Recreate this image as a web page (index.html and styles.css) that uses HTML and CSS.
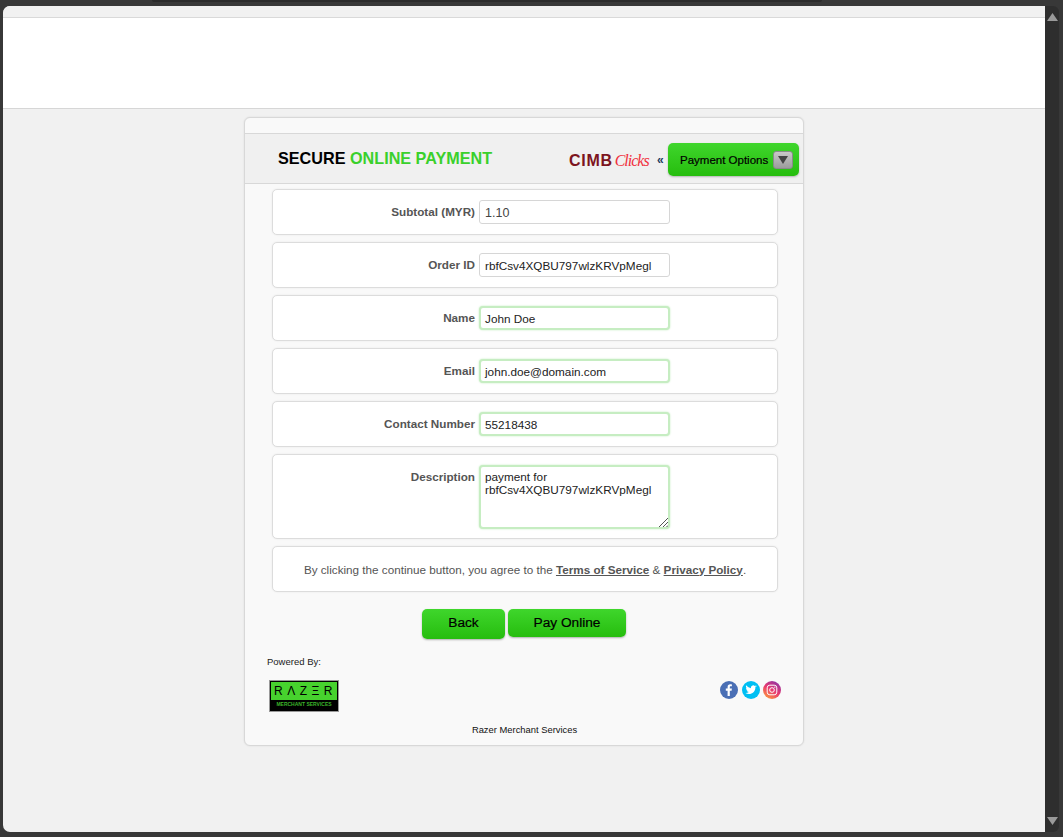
FILE: index.html
```html
<!DOCTYPE html>
<html lang="en">
<head>
  <meta charset="UTF-8" />
  <meta name="viewport" content="width=device-width, initial-scale=1.0"/>
  <title>Secure Online Payment</title>
  <link rel="stylesheet" href="styles.css">
</head>
<body>

  <div class="top-shade"></div>

  <div class="window">
    <div class="viewport">
      <div class="top-strip"></div>
      <div class="site-header"></div>

      <div class="card">
        <div class="card-strip"></div>

        <div class="card-head">
          <h1 class="title">SECURE <span class="title-green">ONLINE PAYMENT</span></h1>
          <div class="bank-logo"><span class="cimb">CIMB</span><span class="clicks">Clicks</span></div>
          <span class="chevrons">«</span>
          <div class="options-btn">
            Payment Options
            <span class="options-arrow">
              <svg width="10" height="8" viewBox="0 0 10 8"><path d="M0 0h10L5 8z" fill="#444"/></svg>
            </span>
          </div>
        </div>

        <div class="rows">
          <div class="row">
            <label class="row-label">Subtotal (MYR)</label>
            <div class="field field-plain field-amount">1.10</div>
          </div>
          <div class="row">
            <label class="row-label">Order ID</label>
            <div class="field field-plain">rbfCsv4XQBU797wlzKRVpMegl</div>
          </div>
          <div class="row">
            <label class="row-label">Name</label>
            <div class="field field-ok">John Doe</div>
          </div>
          <div class="row">
            <label class="row-label">Email</label>
            <div class="field field-ok">john.doe@domain.com</div>
          </div>
          <div class="row">
            <label class="row-label">Contact Number</label>
            <div class="field field-ok">55218438</div>
          </div>
          <div class="row row-tall">
            <label class="row-label">Description</label>
            <div class="field field-ok field-area">payment for<br>rbfCsv4XQBU797wlzKRVpMegl
              <svg class="grip" width="9" height="9" viewBox="0 0 9 9"><path d="M0 9L9 0M4 9L9 4M7.500 9L9 7.500" stroke="#555" fill="none"/></svg>
            </div>
          </div>
          <div class="row row-terms">
            By clicking the continue button, you agree to the&nbsp;<a class="terms-link">Terms of Service</a>&nbsp;&amp;&nbsp;<a class="terms-link">Privacy Policy</a>.
          </div>
        </div>

        <div class="actions">
          <div class="btn btn-back">Back</div>
          <div class="btn btn-pay">Pay Online</div>
        </div>

        <div class="powered">Powered By:</div>

        <div class="brand-row">
          <div class="razer">
            <div class="razer-top">RΛZΞR</div>
            <div class="razer-bottom">MERCHANT SERVICES</div>
          </div>
          <div class="socials">
            <svg class="social" viewBox="0 0 18 18">
              <circle cx="9" cy="9" r="9" fill="#4a6fb5"/>
              <path d="M9.800 15V9.700h1.800l.3-2.100H9.800V6.300c0-.6.200-1 1-1h1.100V3.400c-.2 0-.9-.1-1.600-.1-1.600 0-2.700 1-2.700 2.800v1.500H5.800v2.100h1.800V15z" fill="#fff"/>
            </svg>
            <svg class="social" viewBox="0 0 18 18">
              <circle cx="9" cy="9" r="9" fill="#00bff3"/>
              <path d="M14.500 5.400c-.4.200-.8.300-1.300.4.500-.3.800-.7 1-1.200-.4.300-.9.400-1.400.5a2.300 2.300 0 0 0-3.900 2.100A6.400 6.400 0 0 1 4.200 4.300a2.300 2.300 0 0 0 .7 3c-.4 0-.7-.1-1-.3 0 1.100.8 2.100 1.800 2.300-.3.100-.7.100-1 0 .3.900 1.100 1.600 2.100 1.600a4.600 4.600 0 0 1-3.400 1c3.700 2.300 10.200.7 10-6 .5-.4.800-.8 1.100-1.500z" fill="#fff"/>
            </svg>
            <svg class="social" viewBox="0 0 18 18">
              <defs>
                <linearGradient id="insta" x1="0.200" y1="1" x2="0.800" y2="0">
                  <stop offset="0" stop-color="#fd9b3c"/>
                  <stop offset="0.500" stop-color="#e8386f"/>
                  <stop offset="1" stop-color="#8a35a8"/>
                </linearGradient>
              </defs>
              <circle cx="9" cy="9" r="9" fill="url(#insta)"/>
              <rect x="4.200" y="4.200" width="9.600" height="9.600" rx="2.600" fill="none" stroke="#fff" stroke-width="1"/>
              <circle cx="9" cy="9" r="2.300" fill="none" stroke="#fff" stroke-width="1"/>
              <circle cx="11.800" cy="6.200" r="0.600" fill="#fff"/>
            </svg>
          </div>
        </div>

        <div class="card-foot">Razer Merchant Services</div>
      </div>
    </div>

    <div class="scrollbar">
      <svg width="11" height="8" viewBox="0 0 11 8"><path d="M5.500 0L11 8H0z" fill="#9a9a9a"/></svg>
      <svg width="11" height="8" viewBox="0 0 11 8"><path d="M0 0h11L5.500 8z" fill="#9a9a9a"/></svg>
    </div>
  </div>

</body>
</html>
```

FILE: styles.css
```css
html, body {
  margin: 0;
  height: 100%;
}

body {
  background: #383838;
  font-family: "Liberation Sans", Arial, sans-serif;
  overflow: hidden;
  color: #000;
}

.top-shade {
  position: absolute;
  top: 0;
  left: 152px;
  width: 670px;
  height: 2px;
  background: #2b2b2b;
  border-radius: 0 0 6px 6px;
}

.window {
  height: 826px;
  padding: 6px 4px 5px 3px;
  display: flex;
}

.viewport {
  width: 1042px;
  height: 826px;
  background: #f1f1f1;
  border-radius: 7px 0 0 7px;
  overflow: hidden;
  flex: none;
}

.top-strip {
  height: 11px;
  background: #f1f1f1;
  border-bottom: 1px solid #d9d9d9;
}

.site-header {
  height: 90px;
  background: #fff;
  border-bottom: 1px solid #d6d6d6;
}

.card {
  width: 558px;
  height: 627px;
  margin: 8px 0 0 241px;
  background: #f9f9f9;
  border: 1px solid #d8d8d8;
  border-radius: 6px;
  box-shadow: 0 0 2px rgba(0,0,0,0.1);
}

.card-strip {
  height: 15px;
  border-bottom: 1px solid #d8d8d8;
}

.card-head {
  height: 49px;
  background: #f0f0f0;
  border-bottom: 1px solid #d8d8d8;
  display: flex;
  align-items: center;
  padding-left: 33px;
}

.title {
  margin: 0 0 2px;
  flex: none;
  font-size: 16.200px;
  font-weight: bold;
  line-height: 20px;
  width: 280px;
  white-space: nowrap;
}

.title-green {
  color: #3ad02c;
}

.bank-logo {
  flex: none;
  width: 91px;
  margin-left: 11px;
  display: flex;
  align-items: baseline;
  white-space: nowrap;
  padding-top: 5px;
}

.cimb {
  font-size: 16px;
  font-weight: bold;
  color: #7c1420;
  letter-spacing: 0.700px;
}

.clicks {
  font-family: "Liberation Serif", serif;
  font-size: 16px;
  font-style: italic;
  color: #f0303e;
  letter-spacing: -1px;
  margin-left: 2px;
}

.chevrons {
  flex: none;
  width: 11px;
  margin-left: -3px;
  padding-top: 3px;
  font-size: 12px;
  font-weight: bold;
  color: #1c3a5c;
}

.options-btn {
  flex: none;
  box-sizing: border-box;
  width: 131px;
  height: 33px;
  padding: 0 6px 0 12px;
  margin-top: 2px;
  border-radius: 5px;
  background: linear-gradient(#3fd62c, #26bd0e);
  box-shadow: 0 1px 2px rgba(0,0,0,0.25);
  display: flex;
  align-items: center;
  justify-content: space-between;
  font-size: 11.500px;
  -webkit-text-stroke: 0.2px #000;
  white-space: nowrap;
}

.options-arrow {
  box-sizing: border-box;
  width: 20px;
  height: 18px;
  border: 1px solid #8a8a8a;
  border-radius: 3px;
  background: linear-gradient(#c8c8c8, #9c9c9c);
  display: flex;
  align-items: center;
  justify-content: center;
}

.rows {
  display: flex;
  flex-direction: column;
  gap: 7px;
  width: 506px;
  margin: 5px 0 0 27px;
}

.row {
  box-sizing: border-box;
  height: 46px;
  background: #fff;
  border: 1px solid #dcdcdc;
  border-radius: 5px;
  box-shadow: 0 0 2px rgba(0,0,0,0.08);
  display: flex;
  align-items: flex-start;
  padding: 10px 0 0;
}

.row-tall {
  height: 85px;
}

.row-terms {
  align-items: center;
  justify-content: center;
  padding: 0;
  font-size: 11.700px;
  color: #555;
}

.terms-link {
  font-weight: bold;
  text-decoration: underline;
}

.row-label {
  width: 202px;
  text-align: right;
  font-size: 11.700px;
  font-weight: bold;
  color: #555;
  line-height: 20px;
  margin-right: 4px;
  padding-top: 2px;
}

.field {
  box-sizing: border-box;
  width: 191px;
  height: 24px;
  border-radius: 3px;
  background: #fff;
  font-size: 11.750px;
  line-height: 14px;
  padding: 5px 5px;
  color: #222;
  position: relative;
  white-space: nowrap;
}

.field-plain {
  border: 1px solid #d6d6d6;
}

.field-amount {
  font-size: 12.500px;
  color: #444;
}

.field-ok {
  border: 2px solid #c6edc2;
  border-radius: 4px;
  padding: 4px;
  box-shadow: 0 0 2px #bfeabb;
}

.field-area {
  height: 64px;
  line-height: 13px;
  padding-top: 3px;
}

.grip {
  position: absolute;
  right: 0;
  bottom: 0;
}

.actions {
  display: flex;
  justify-content: flex-start;
  align-items: flex-start;
  gap: 3px;
  margin: 17px 0 0 177px;
}

.btn {
  border-radius: 5px;
  background: linear-gradient(#3fd62c, #26bd0e);
  box-shadow: 0 1px 2px rgba(0,0,0,0.3);
  text-align: center;
  font-size: 13.700px;
  line-height: 27px;
  color: #000;
  -webkit-text-stroke: 0.2px #000;
}

.btn-back {
  width: 83px;
  height: 30px;
}

.btn-pay {
  width: 118px;
  height: 28px;
}

.powered {
  font-size: 9.500px;
  line-height: 11px;
  margin: 17px 0 0 22px;
  color: #222;
}

.brand-row {
  display: flex;
  justify-content: space-between;
  align-items: flex-start;
  margin: 13px 22px 0 24px;
}

.razer {
  box-sizing: border-box;
  width: 70px;
  height: 32px;
  border: 1px solid #999;
  background: #000;
  padding: 1px;
  display: flex;
  flex-direction: column;
}

.razer-top {
  height: 18px;
  background: #47d22e;
  color: #000;
  font-size: 12px;
  line-height: 18px;
  letter-spacing: 4.500px;
  text-align: center;
  padding-left: 3px;
}

.razer-bottom {
  color: #3cb52a;
  font-size: 5px;
  font-weight: bold;
  line-height: 9px;
  text-align: center;
  white-space: nowrap;
}

.socials {
  display: flex;
  gap: 3.500px;
  margin-top: 1px;
}

.social {
  width: 18px;
  height: 18px;
}

.card-foot {
  font-size: 9.400px;
  line-height: 11px;
  text-align: center;
  margin-top: 12px;
  padding-left: 1px;
  color: #111;
}

.scrollbar {
  width: 14px;
  height: 826px;
  background: #2e2e2e;
  border-radius: 0 6px 6px 0;
  display: flex;
  flex-direction: column;
  justify-content: space-between;
  align-items: center;
  padding: 7px 0;
  box-sizing: border-box;
  flex: none;
}
```
